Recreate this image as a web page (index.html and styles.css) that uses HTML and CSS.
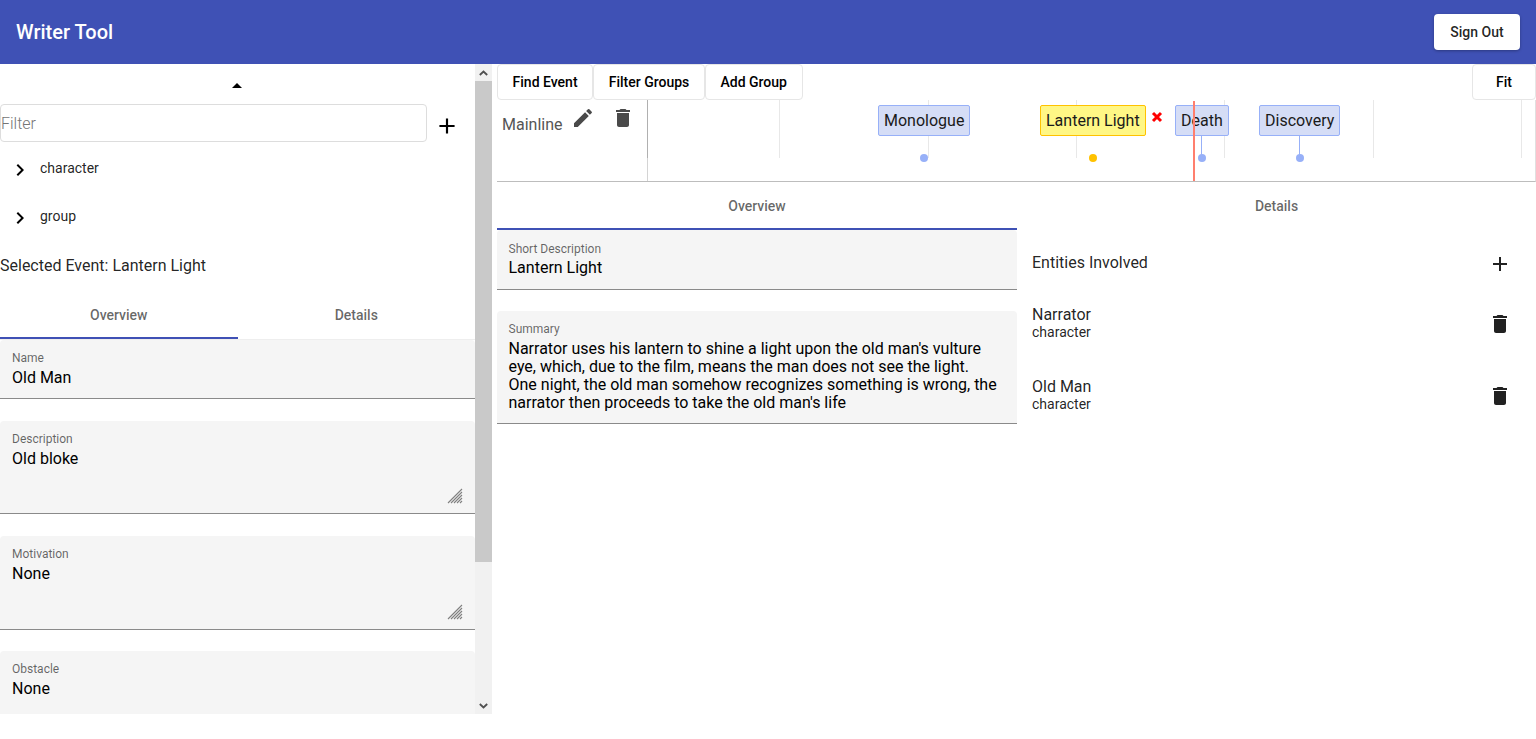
FILE: index.html
```html
<!doctype html>
<html lang="en">
<head>
	<meta charset="UTF-8">
	<title>Writer Tool</title>
	<link rel="stylesheet" href="styles.css">
</head>
<body>
	<header class="appbar">
		<h1 class="brand">Writer Tool</h1>
		<button class="signout">Sign Out</button>
	</header>
	<div class="main">
		<aside class="side">
			<div class="side-inner">
				<div class="collapse"><span class="caret"></span></div>
				<div class="filter-row">
					<input class="filter" placeholder="Filter">
					<svg class="filter-add" viewBox="0 0 24 24"><path d="M19 13h-6v6h-2v-6H5v-2h6V5h2v6h6v2z"/></svg>
				</div>
				<div class="tree">
					<div class="tree-row">
						<svg class="chev" viewBox="0 0 24 24"><path d="M10 6 8.59 7.41 13.17 12l-4.58 4.59L10 18l6-6z"/></svg>
						<span>character</span>
					</div>
					<div class="tree-row">
						<svg class="chev" viewBox="0 0 24 24"><path d="M10 6 8.59 7.41 13.17 12l-4.58 4.59L10 18l6-6z"/></svg>
						<span>group</span>
					</div>
				</div>
				<div class="selected">Selected Event: Lantern Light</div>
				<div class="tabs">
					<div class="tab active">Overview</div>
					<div class="tab">Details</div>
				</div>
				<div class="field name-field">
					<label>Name</label>
					<div class="value">Old Man</div>
				</div>
				<div class="field area">
					<label>Description</label>
					<div class="value">Old bloke</div>
					<svg class="grip" viewBox="0 0 16 16"><path d="M15 1 1 15M15 4 4 15M15 7 7 15M15 10 10 15M15 13 13 15"/></svg>
				</div>
				<div class="field area">
					<label>Motivation</label>
					<div class="value">None</div>
					<svg class="grip" viewBox="0 0 16 16"><path d="M15 1 1 15M15 4 4 15M15 7 7 15M15 10 10 15M15 13 13 15"/></svg>
				</div>
				<div class="field area">
					<label>Obstacle</label>
					<div class="value">None</div>
				</div>
			</div>
			<div class="scrollbar">
				<div class="sb-btn"><svg viewBox="0 0 9 6"><path d="M.8 5 4.5 1.5 8.2 5"/></svg></div>
				<div class="sb-track"><div class="sb-thumb"></div></div>
				<div class="sb-btn"><svg viewBox="0 0 9 6"><path d="M.8 1 4.5 4.5 8.2 1"/></svg></div>
			</div>
		</aside>
		<section class="content">
			<div class="timeline">
				<div class="toolbar">
					<button class="tbtn">Find Event</button>
					<button class="tbtn">Filter Groups</button>
					<button class="tbtn">Add Group</button>
					<button class="tbtn fit">Fit</button>
				</div>
				<div class="group">
					<div class="group-label">
						<span class="group-name">Mainline</span>
						<svg class="gicon pencil" viewBox="0 0 24 24"><path d="M3 17.25V21h3.75L17.81 9.94l-3.75-3.75L3 17.25zM20.71 7.04c.39-.39.39-1.02 0-1.41l-2.34-2.34a.9959.9959 0 0 0-1.41 0l-1.83 1.83 3.75 3.75 1.83-1.83z"/></svg>
						<svg class="gicon trash" viewBox="0 0 24 24"><path d="M6 19c0 1.1.9 2 2 2h8c1.1 0 2-.9 2-2V7H6v12zM19 4h-3.5l-1-1h-5l-1 1H5v2h14V4z"/></svg>
					</div>
					<div class="canvas">
						<i class="tick axis"></i>
						<i class="tick t0"></i><i class="tick t1"></i><i class="tick t2"></i><i class="tick t3"></i><i class="tick t4"></i><i class="tick t5"></i>
						<i class="stem s-death"></i><i class="stem s-disc"></i>
						<div class="item i-mono">Monologue</div>
						<div class="item sel i-lantern">Lantern Light</div>
						<svg class="remove" viewBox="0 0 12 12"><path d="M2 2 10 10M10 2 2 10"/></svg>
						<div class="item i-death">Death</div>
						<div class="item i-disc">Discovery</div>
						<i class="dot d-mono"></i><i class="dot sel d-lantern"></i><i class="dot d-death"></i><i class="dot d-disc"></i>
						<i class="now"></i>
					</div>
				</div>
			</div>
			<div class="panes">
				<div class="pane-left">
					<div class="tabs">
						<div class="tab active">Overview</div>
					</div>
					<div class="field short-field">
						<label>Short Description</label>
						<div class="value">Lantern Light</div>
					</div>
					<div class="field summary">
						<label>Summary</label>
						<div class="value">Narrator uses his lantern to shine a light upon the old man's vulture eye, which, due to the film, means the man does not see the light. One night, the old man somehow recognizes something is wrong, the narrator then proceeds to take the old man's life</div>
					</div>
				</div>
				<div class="pane-right">
					<div class="tabs">
						<div class="tab">Details</div>
					</div>
					<div class="ent-head">
						<span>Entities Involved</span>
						<svg class="ent-icon" viewBox="0 0 24 24"><path d="M19 13h-6v6h-2v-6H5v-2h6V5h2v6h6v2z"/></svg>
					</div>
					<div class="ent">
						<div class="ent-text"><div class="ent-name">Narrator</div><div class="ent-type">character</div></div>
						<svg class="ent-icon" viewBox="0 0 24 24"><path d="M6 19c0 1.1.9 2 2 2h8c1.1 0 2-.9 2-2V7H6v12zM19 4h-3.5l-1-1h-5l-1 1H5v2h14V4z"/></svg>
					</div>
					<div class="ent">
						<div class="ent-text"><div class="ent-name">Old Man</div><div class="ent-type">character</div></div>
						<svg class="ent-icon" viewBox="0 0 24 24"><path d="M6 19c0 1.1.9 2 2 2h8c1.1 0 2-.9 2-2V7H6v12zM19 4h-3.5l-1-1h-5l-1 1H5v2h14V4z"/></svg>
					</div>
				</div>
			</div>
		</section>
	</div>
</body>
</html>
```

FILE: styles.css
```css
* {
	box-sizing: border-box;
}

html, body {
	height: 100%;
}

body {
	margin: 0;
	background-color: #fff;
	color: #000;
	font: 400 16px "Roboto", "Liberation Sans", sans-serif;
	overflow: hidden;
}

button {
	font-family: inherit;
	cursor: pointer;
}

.appbar {
	display: flex;
	align-items: center;
	justify-content: space-between;
	height: 64px;
	padding: 0 16px;
	background-color: #3f51b5;
	color: #fff;
}

.brand {
	margin: 0;
	font-size: 20px;
	font-weight: 500;
	line-height: 32px;
}

.signout {
	width: 86px;
	height: 36px;
	border: 0;
	border-radius: 4px;
	background-color: #fff;
	color: rgba(0, 0, 0, .87);
	font-size: 14px;
	font-weight: 500;
	box-shadow: 0 1px 3px rgba(0, 0, 0, .3);
}

.main {
	display: flex;
	height: 650px;
}

/* left column */
.side {
	display: flex;
	flex: none;
	width: 492px;
	height: 650px;
}

.side-inner {
	flex: none;
	width: 475px;
	height: 650px;
	overflow: hidden;
}

.scrollbar {
	display: flex;
	flex: none;
	flex-direction: column;
	width: 17px;
	background-color: #f1f1f1;
}

.sb-btn {
	display: flex;
	flex: none;
	align-items: center;
	justify-content: center;
	height: 17px;
}

.sb-btn svg {
	width: 9px;
	height: 6px;
	fill: none;
	stroke: #505050;
	stroke-width: 1.8;
}

.sb-track {
	flex: 1;
}

.sb-thumb {
	height: 481px;
	background-color: #c9c9c9;
}

.collapse {
	display: flex;
	justify-content: center;
	height: 40px;
	padding: 19px 1px 0 0;
}

.caret {
	width: 0;
	height: 0;
	border-left: 5px solid transparent;
	border-right: 5px solid transparent;
	border-bottom: 5px solid #000;
}

.filter-row {
	display: flex;
	align-items: flex-start;
}

.filter {
	width: 427px;
	height: 38px;
	padding: 0;
	border: 1px solid #ddd;
	border-radius: 4px;
	outline: 0;
	font: 300 16px "Roboto", sans-serif;
}

.filter::placeholder {
	color: #757575;
}

.filter-add {
	flex: none;
	width: 26px;
	height: 26px;
	margin: 9px 0 0 7px;
}

.tree {
	margin-top: 10px;
}

.tree-row {
	display: flex;
	align-items: flex-start;
	height: 48px;
	padding-left: 8px;
	font-size: 14px;
	color: rgba(0, 0, 0, .87);
	line-height: 20px;
}

.tree-row span {
	margin: 6px 0 0 8px;
}

.chev {
	width: 24px;
	height: 24px;
	margin-top: 6px;
}

.selected {
	height: 24px;
	margin-top: 6px;
	line-height: 24px;
	color: rgba(0, 0, 0, .87);
}

.tabs {
	display: flex;
	height: 48px;
}

.side .tabs {
	margin: 13px 0 1px;
	box-shadow: 0 1px 0 #eee;
}

.tab {
	display: flex;
	flex: 1;
	align-items: center;
	justify-content: center;
	color: rgba(0, 0, 0, .6);
	font-size: 14px;
	font-weight: 500;
}

.tab.active {
	box-shadow: inset 0 -2px 0 #3f51b5;
}

.field {
	position: relative;
	margin-bottom: 21.9px;
	padding: 11px 12px 0;
	background-color: #f5f5f5;
	border-bottom: 1px solid #8a8a8a;
	border-radius: 4px 4px 0 0;
}

.field label {
	display: block;
	color: rgba(0, 0, 0, .6);
	font-size: 12px;
	line-height: 15px;
}

.value {
	margin-top: 2px;
	line-height: 19px;
	color: #000;
}

.name-field {
	height: 59px;
}

.area {
	height: 93.4px;
}

.area:last-child {
	margin-top: -.5px;
}

.grip {
	position: absolute;
	right: 12px;
	bottom: 9px;
	width: 16px;
	height: 16px;
	fill: none;
	stroke: #808080;
	stroke-width: 1.1;
}

/* right column */
.content {
	flex: 1;
	min-width: 0;
	padding-left: 5px;
}

.toolbar {
	display: flex;
	height: 36px;
}

.tbtn {
	height: 36px;
	padding: 0 14.6px;
	border: 1px solid #e6e6e6;
	border-radius: 4px;
	background-color: #fff;
	color: #000;
	font-size: 14px;
	font-weight: 500;
}

.fit {
	width: 64px;
	margin-left: auto;
}

.group {
	display: flex;
	height: 82px;
	border-bottom: 1px solid #bdbdbd;
	border-right: 1px solid #e0e0e0;
}

.group-label {
	position: relative;
	flex: none;
	width: 151px;
	border-right: 1px solid #d4d4d4;
}

.group-name {
	position: absolute;
	left: 5px;
	top: 15px;
	color: #555;
	line-height: 19px;
}

.gicon {
	position: absolute;
	top: 6px;
	width: 24px;
	height: 24px;
	fill: #4a4a4a;
}

.pencil {
	left: 74px;
}

.trash {
	left: 114px;
}

.canvas {
	position: relative;
	flex: 1;
}

.tick {
	position: absolute;
	top: 0;
	width: 1px;
	height: 58px;
	background-color: #e8e8e8;
}

.axis {
	left: -1px;
	background-color: #b0b0b0;
}

.t0 { left: 131px; }
.t1 { left: 280px; }
.t2 { left: 428px; }
.t3 { left: 576px; }
.t4 { left: 725px; }
.t5 { left: 873px; }

.item {
	position: absolute;
	top: 5px;
	height: 31px;
	padding: 0 5px;
	border: 1px solid #97b0f8;
	border-radius: 2px;
	background-color: #d5ddf6;
	color: #1a1a1a;
	font-size: 16px;
	line-height: 29px;
	white-space: nowrap;
}

.item.sel {
	border-color: #ffc200;
	background-color: #fff785;
}

.i-mono { left: 230px; }
.i-lantern { left: 392px; }
.i-death { left: 527px; }
.i-disc { left: 611px; }

.stem {
	position: absolute;
	top: 36px;
	width: 1px;
	height: 21px;
	background-color: #97b0f8;
}

.s-death { left: 553px; }
.s-disc { left: 651px; }

.dot {
	position: absolute;
	top: 53.5px;
	width: 8px;
	height: 8px;
	border-radius: 50%;
	background-color: #97b0f8;
}

.dot.sel {
	background-color: #ffc200;
}

.d-mono { left: 272px; }
.d-lantern { left: 441px; }
.d-death { left: 550px; }
.d-disc { left: 648px; }

.remove {
	position: absolute;
	left: 503px;
	top: 11px;
	width: 12px;
	height: 12px;
	fill: none;
	stroke: #f00;
	stroke-width: 3;
}

.now {
	position: absolute;
	left: 545px;
	top: 1px;
	width: 2px;
	height: 80px;
	background-color: #ff7f6e;
}

.panes {
	display: flex;
}

.pane-left {
	flex: none;
	width: 520px;
}

.pane-left .field {
	padding-left: 11.5px;
}

.short-field {
	height: 60px;
	margin-bottom: 21px;
	padding-top: 12px;
}

.short-field .value {
	margin-top: 1px;
}

.summary {
	height: 113px;
}

.summary .value {
	max-width: 490px;
	margin-top: 3px;
	line-height: 18px;
}

.pane-right {
	flex: 1;
}

.ent-head,
.ent {
	display: flex;
	align-items: center;
	justify-content: space-between;
	padding: 0 24px 0 15px;
	color: rgba(0, 0, 0, .87);
}

.ent-head {
	height: 58px;
	padding-top: 10px;
}

.ent-head span {
	margin-bottom: 4px;
}

.ent {
	height: 72px;
}

.ent-text {
	padding-bottom: 1px;
}

.ent-name {
	line-height: 18px;
}

.ent-type {
	margin-top: -1px;
	font-size: 14px;
	line-height: 18px;
}

.ent-icon {
	width: 24px;
	height: 24px;
	fill: rgba(0, 0, 0, .87);
}
```
